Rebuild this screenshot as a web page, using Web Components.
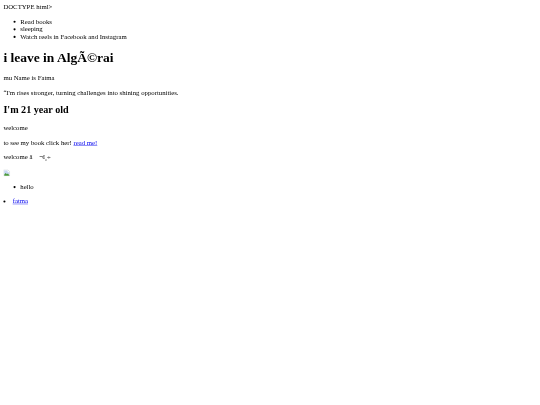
<!DOCTYPE html>
<html>
<head>
<meta charset="utf-8">
<style>
  html, body { margin: 0; padding: 0; background: #fff; }
</style>
</head>
<body>
<old-page>
  DOCTYPE html&gt;
  <item-list items="Read books|sleeping|Watch reels in Facebook and Instagram"></item-list>
  <page-title level="1">i leave in AlgÃ©rai</page-title>
  <text-line>mu Name is Fatma</text-line>
  <text-line>“I'm rises stronger, turning challenges into shining opportunities.</text-line>
  <page-title level="2">I'm 21 year old</page-title>
  <text-line>welcome</text-line>
  <text-line>to see my book click her! <a href="#" style="color:#00e">read me!</a></text-line>
  <text-line>welcome â &nbsp;&nbsp; ¬ï¸÷</text-line>
  <broken-pic></broken-pic>
  <item-list items="hello"></item-list>
  <link-item href="#">fatma</link-item>
</old-page>

<script>
// the whole page was shot at 1280 wide and shrunk to 540, so it is laid out at 1280 and scaled
class OldPage extends HTMLElement {
  constructor() {
    super();
    const shadow = this.attachShadow({ mode: "open" });
    shadow.innerHTML = `
      <style>
        :host {
          display: block;
          width: 540px;
          height: 405px;
          overflow: hidden;
          filter: blur(0.3px);
        }
        .sheet {
          box-sizing: border-box;
          width: 1280px;
          height: 960px;
          padding: 8px;
          transform: scale(0.421875);
          transform-origin: 0 0;
          font-family: "Liberation Serif", serif;
          font-size: 16px;
          color: #000;
        }
      </style>
      <div class="sheet"><slot></slot></div>
    `;
  }
}
customElements.define("old-page", OldPage);

class ItemList extends HTMLElement {
  constructor() {
    super();
    const shadow = this.attachShadow({ mode: "open" });
    const items = (this.getAttribute("items") || "").split("|");
    shadow.innerHTML = `
      <style>
        :host { display: block; margin: 16px 0; }
        ul { margin: 0; padding-left: 40px; }
      </style>
      <ul>${items.map((i) => `<li>${i}</li>`).join("")}</ul>
    `;
  }
}
customElements.define("item-list", ItemList);

class PageTitle extends HTMLElement {
  constructor() {
    super();
    const shadow = this.attachShadow({ mode: "open" });
    const big = this.getAttribute("level") === "1";
    shadow.innerHTML = `
      <style>
        :host {
          display: block;
          font-weight: bold;
          font-size: ${big ? 32 : 24}px;
          margin: ${big ? 21.44 : 19.92}px 0;
        }
      </style>
      <slot></slot>
    `;
  }
}
customElements.define("page-title", PageTitle);

class TextLine extends HTMLElement {
  constructor() {
    super();
    const shadow = this.attachShadow({ mode: "open" });
    shadow.innerHTML = `
      <style>
        :host { display: block; margin: 16px 0; }
      </style>
      <slot></slot>
    `;
  }
}
customElements.define("text-line", TextLine);

class BrokenPic extends HTMLElement {
  constructor() {
    super();
    const shadow = this.attachShadow({ mode: "open" });
    shadow.innerHTML = `
      <style>
        :host { display: block; margin-top: 16px; padding-top: 5px; }
        svg { display: block; width: 16px; height: 16px; }
      </style>
      <svg viewBox="0 0 16 16">
        <path d="M1 .5h9.5l4.5 4.5v10.5H1z" fill="#fff" stroke="#b4bcc8" stroke-width="1"/>
        <path d="M2 2h8v4h4v5H2z" fill="#c6d6f2"/>
        <path d="M2 14.5v-3l3.5-3.5 3 3 2-1.5 3.5 3.5v1.5z" fill="#4c9a3c"/>
      </svg>
    `;
  }
}
customElements.define("broken-pic", BrokenPic);

class LinkItem extends HTMLElement {
  constructor() {
    super();
    const shadow = this.attachShadow({ mode: "open" });
    shadow.innerHTML = `
      <style>
        :host { display: list-item; list-style: disc inside; }
        a { color: #00e; }
      </style>
      <a href="${this.getAttribute("href")}"><slot></slot></a>
    `;
  }
}
customElements.define("link-item", LinkItem);
</script>
</body>
</html>
